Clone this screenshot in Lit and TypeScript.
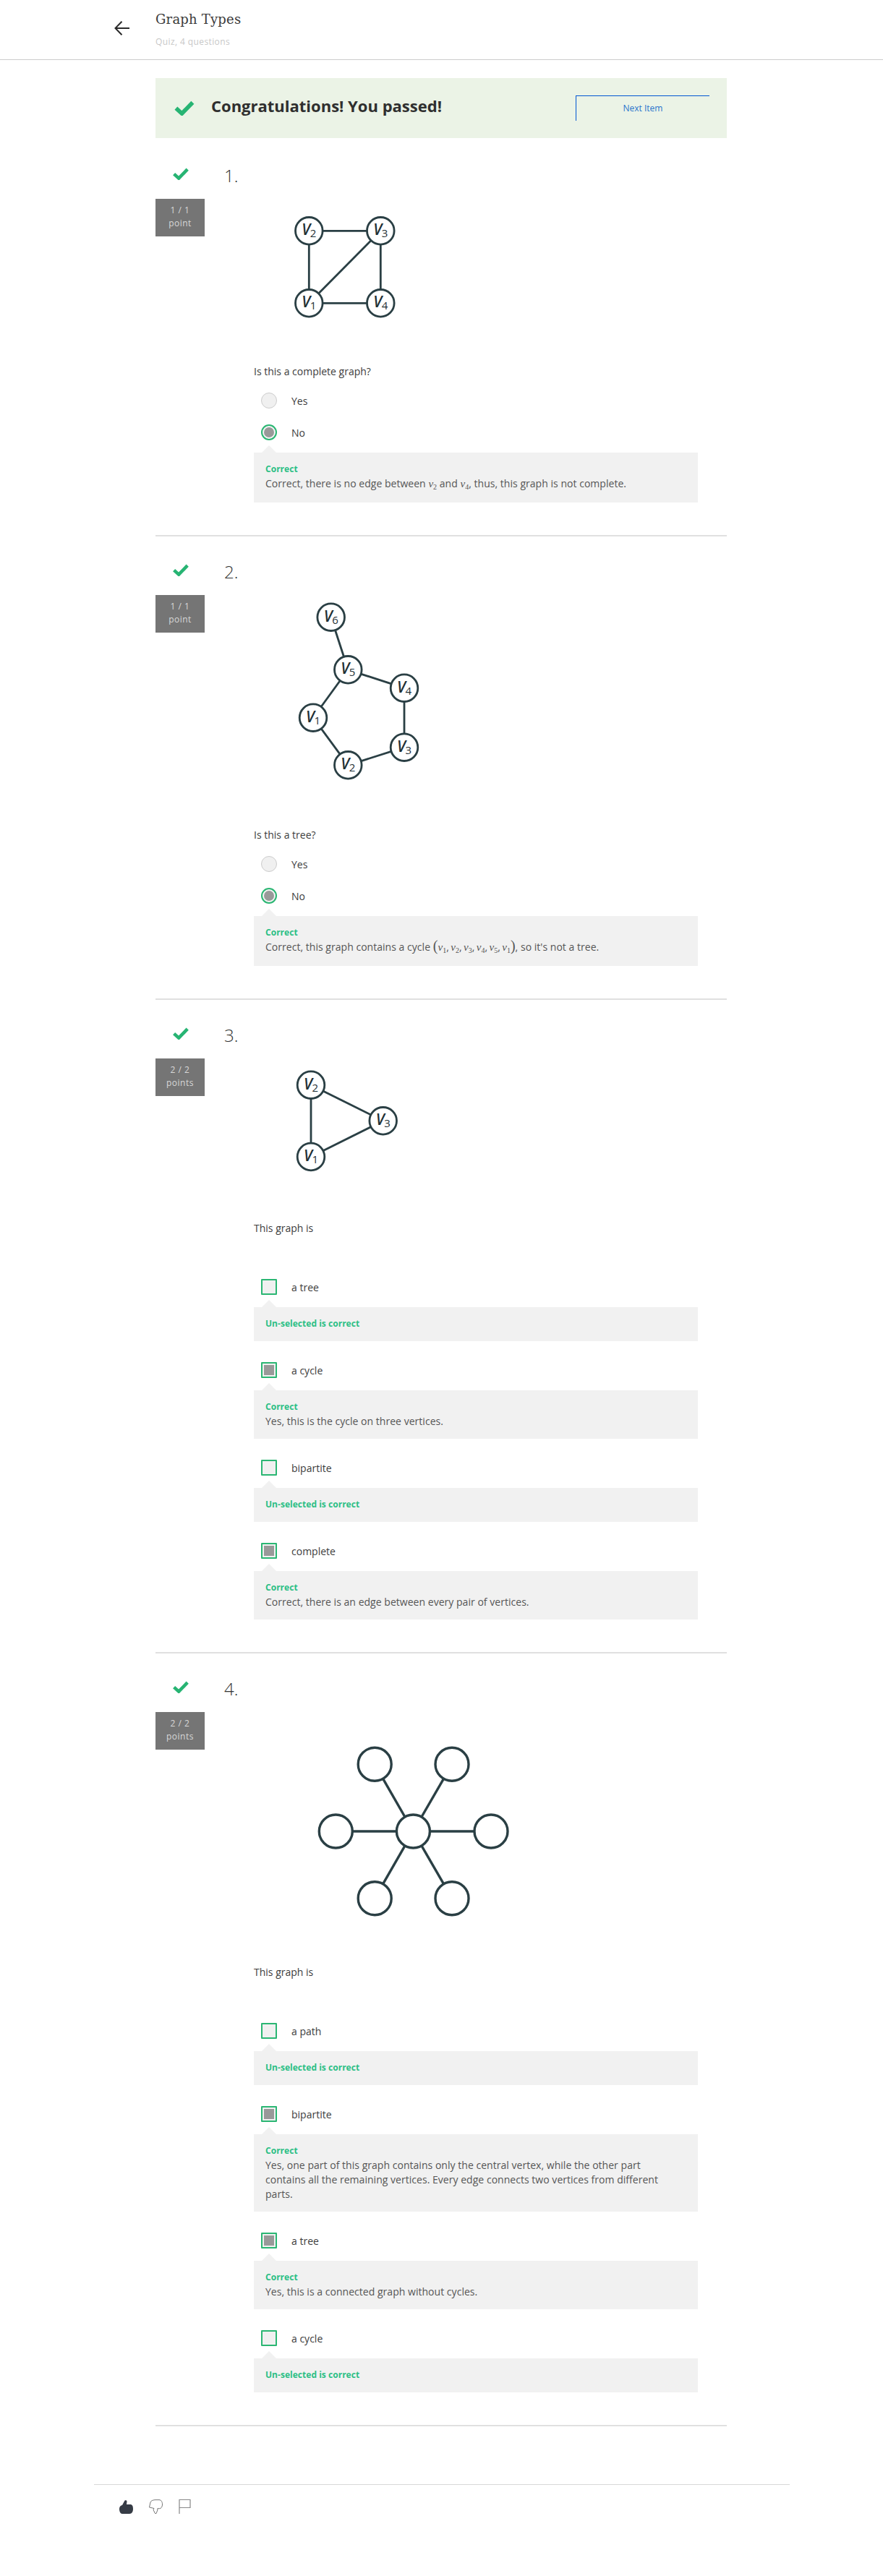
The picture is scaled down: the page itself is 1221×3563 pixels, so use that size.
import { LitElement, html, css, svg, nothing } from "lit";
import { customElement } from "lit/decorators.js";

type Pt = [number, number];
interface Graph { h: number; r: number; sw: number; nodes: Pt[]; labels: string[]; edges: [number, number][]; }
interface Opt { label: string; selected: boolean; head?: string; body?: unknown; math?: boolean; }

const top1 = 232, top2 = 780, top3 = 1422, top4 = 2326, L = 351;
const p = (x: number, y: number, t: number): Pt => [x - L, y - t];

const g1: Graph = { h: 272, r: 18.8, sw: 2.8, labels: ["1", "2", "3", "4"],
  nodes: [p(427.3, 419.3, top1), p(427.3, 319.3, top1), p(526.3, 319.3, top1), p(526.3, 419.3, top1)],
  edges: [[0, 1], [1, 2], [2, 3], [3, 0], [0, 2]] };
const g2: Graph = { h: 365, r: 18.8, sw: 2.8, labels: ["1", "2", "3", "4", "5", "6"],
  nodes: [p(433, 992.7, top2), p(481.3, 1058.3, top2), p(559, 1033.7, top2), p(559, 951.7, top2), p(481.3, 926.3, top2), p(457.7, 853.7, top2)],
  edges: [[0, 1], [1, 2], [2, 3], [3, 4], [4, 0], [4, 5]] };
const g3: Graph = { h: 268, r: 18.8, sw: 2.8, labels: ["1", "2", "3"],
  nodes: [p(430, 1601, top3), p(430, 1501.7, top3), p(529.7, 1551.3, top3)],
  edges: [[0, 1], [1, 2], [2, 0]] };
const g4: Graph = { h: 393, r: 23, sw: 3.4, labels: [],
  nodes: [p(571.4, 2534, top4), p(518.2, 2441.3, top4), p(625, 2441.3, top4), p(464.3, 2534, top4), p(679, 2534, top4), p(518.2, 2626.7, top4), p(625, 2626.7, top4)],
  edges: [[0, 1], [0, 2], [0, 3], [0, 4], [0, 5], [0, 6]] };

const v = (n: string) => html`<span class="mv">v<sub>${n}</sub></span>`;

const questions = [
  { n: "1.", s: "1 / 1", u: "point", g: g1, q: "Is this a complete graph?", kind: "radio", opts: [
    { label: "Yes", selected: false },
    { label: "No", selected: true, head: "Correct", math: true, body: html`Correct, there is no edge between ${v("2")} and ${v("4")}, thus, this graph is not complete.` },
  ] as Opt[] },
  { n: "2.", s: "1 / 1", u: "point", g: g2, q: "Is this a tree?", kind: "radio", opts: [
    { label: "Yes", selected: false },
    { label: "No", selected: true, head: "Correct", math: true, body: html`Correct, this graph contains a cycle <span class="paren">(</span>${v("1")},&thinsp;${v("2")},&thinsp;${v("3")},&thinsp;${v("4")},&thinsp;${v("5")},&thinsp;${v("1")}<span class="paren">)</span>, so it's not a tree.` },
  ] as Opt[] },
  { n: "3.", s: "2 / 2", u: "points", g: g3, q: "This graph is", kind: "check", opts: [
    { label: "a tree", selected: false, head: "Un-selected is correct" },
    { label: "a cycle", selected: true, head: "Correct", body: "Yes, this is the cycle on three vertices." },
    { label: "bipartite", selected: false, head: "Un-selected is correct" },
    { label: "complete", selected: true, head: "Correct", body: "Correct, there is an edge between every pair of vertices." },
  ] as Opt[] },
  { n: "4.", s: "2 / 2", u: "points", g: g4, q: "This graph is", kind: "check", opts: [
    { label: "a path", selected: false, head: "Un-selected is correct" },
    { label: "bipartite", selected: true, head: "Correct", body: "Yes, one part of this graph contains only the central vertex, while the other part contains all the remaining vertices. Every edge connects two vertices from different parts." },
    { label: "a tree", selected: true, head: "Correct", body: "Yes, this is a connected graph without cycles." },
    { label: "a cycle", selected: false, head: "Un-selected is correct" },
  ] as Opt[] },
];

const check = (cls: string) => html`<svg class=${cls} viewBox="0 0 22 17"><path d="M1.6 8.6 L8.2 14.6 L20.2 2.2" fill="none" stroke="#27b473" stroke-width="4.6"/></svg>`;

@customElement("app-root")
export class AppRoot extends LitElement {
  static styles = css`
    :host { display: block; width: 1221px; height: 3563px; background: #fff; font-family: "Open Sans", sans-serif; color: #373a3c; overflow: hidden; }
    .top { height: 82px; border-bottom: 1px solid #ccc; display: flex; }
    .back { width: 215px; flex: none; }
    .back svg { display: block; width: 22px; height: 20px; margin: 29px 0 0 158px; }
    .title { font-family: "DejaVu Serif", serif; font-size: 18px; line-height: 24px; letter-spacing: 0.2px; color: #3a3a3a; padding-top: 15px; }
    .sub { font-size: 12px; line-height: 16px; color: #c8c8c8; letter-spacing: 0.4px; margin-top: 11px; }
    main { padding: 25px 0 0 215px; width: 790px; }
    .banner { height: 83px; background: #ebf3e6; display: flex; align-items: center; padding: 0 24px 0 26px; box-sizing: border-box; margin-bottom: 3px; }
    .bcheck { width: 28px; height: 21px; flex: none; }
    .banner h2 { flex: 1; margin: 0 0 7px 23px; font-size: 22px; line-height: 28px; font-weight: 700; color: #2f2f2f; }
    .next { width: 185px; height: 35px; box-sizing: border-box; border-top: 1px solid #0056d2; border-left: 1px solid #0056d2; color: #2a73cc; font-size: 12px; line-height: 34px; text-align: center; }
    .q { display: grid; grid-template-columns: 68px 68px 614px; padding: 38px 0 45px; border-bottom: 2px solid #e0e0e0; }
    .left { display: flex; flex-direction: column; align-items: flex-start; }
    .qcheck { width: 22px; height: 17px; margin-left: 24px; }
    .score { width: 68px; height: 52px; margin-top: 26px; background: #757575; color: #d8d8d8; font-size: 12px; line-height: 18px; text-align: center; padding-top: 7px; box-sizing: border-box; letter-spacing: 0.5px; }
    .num { padding-left: 27px; font-size: 24px; font-weight: 300; line-height: 24px; color: #333; margin-top: -1px; }
    .fig { display: block; }
    .qt { font-size: 14px; line-height: 20px; color: #3c3c3c; margin: 0; }
    .opts { display: flex; flex-direction: column; }
    .opts.radio { padding-top: 19px; }
    .opts.check { padding-top: 60px; }
    .row { display: flex; align-items: center; height: 22px; gap: 20px; padding-left: 10px; font-size: 14px; color: #3c3c3c; }
    .radio .item + .item { margin-top: 22px; }
    .check .item + .item { margin-top: 29px; }
    .box { width: 22px; height: 22px; box-sizing: border-box; background: #f0f0f0; position: relative; flex: none; }
    .radio .box { border-radius: 50%; border: 1px solid #ccc; }
    .check .box { border-radius: 1px; border: 2px solid #2bb673; }
    .radio .box.sel { border: 2px solid #2bb673; background: #f4f4f4; }
    .radio .box.sel::after { content: ""; position: absolute; inset: 2px; border-radius: 50%; background: #999; }
    .check .box.sel::after { content: ""; position: absolute; inset: 2px; background: #999; }
    .fb { position: relative; margin-top: 17px; background: #f1f1f1; padding: 13px 40px 14px 16px; font-size: 14px; line-height: 20px; color: #555; letter-spacing: 0.03px; }
    .fb.math { padding-bottom: 16px; }
    .fb::before { content: ""; position: absolute; left: 11px; top: -10px; border-left: 10px solid transparent; border-right: 10px solid transparent; border-bottom: 10px solid #f1f1f1; }
    .head { font-size: 12px; font-weight: 700; color: #2bbf85; }
    .mv { font-family: "Liberation Serif", serif; font-style: italic; font-size: 15px; }
    .mv sub { font-style: normal; font-size: 10px; line-height: 0; vertical-align: -3px; }
    .paren { font-family: "Liberation Serif", serif; font-size: 20px; line-height: 0; }
    .foot { margin: 80px 0 0 130px; width: 962px; border-top: 1px solid #d8d8d8; padding: 20px 0 0 34px; box-sizing: border-box; display: flex; gap: 21px; }
    .foot svg { width: 20px; height: 20px; }
    .foot svg.flag { margin-left: 1px; }
    .lbl { font-family: "Open Sans", sans-serif; font-style: italic; font-weight: 600; font-size: 21px; fill: #1f3035; }
    .subl { font-family: "Open Sans", sans-serif; font-weight: 500; font-size: 15px; fill: #1f3035; }
  `;

  private graph(g: Graph) {
    return html`<svg class="fig" width="614" height=${g.h} viewBox="0 0 614 ${g.h}">
      ${g.edges.map(([a, b]) => svg`<line x1=${g.nodes[a][0]} y1=${g.nodes[a][1]} x2=${g.nodes[b][0]} y2=${g.nodes[b][1]} stroke="#2a3f44" stroke-width=${g.sw} />`)}
      ${g.nodes.map((n: Pt, i: number) => svg`
        <circle cx=${n[0]} cy=${n[1]} r=${g.r} fill="#fff" stroke="#2a3f44" stroke-width=${g.sw} />
        ${g.labels[i] ? svg`<text class="lbl" x=${n[0] - 10} y=${n[1] + 6}>V</text><text class="subl" x=${n[0] + 1.5} y=${n[1] + 9}>${g.labels[i]}</text>` : nothing}
      `)}
    </svg>`;
  }

  render() {
    return html`
      <header class="top">
        <div class="back">
          <svg viewBox="0 0 22 20"><path d="M21 10 H2 M10.5 .7 L1.5 10 L10.5 19.3" fill="none" stroke="#2a2a2a" stroke-width="2"/></svg>
        </div>
        <div>
          <div class="title">Graph Types</div>
          <div class="sub">Quiz, 4 questions</div>
        </div>
      </header>
      <main>
        <div class="banner">
          ${check("bcheck")}
          <h2>Congratulations! You passed!</h2>
          <div class="next">Next Item</div>
        </div>
        ${questions.map((q) => html`
          <section class="q">
            <div class="left">
              ${check("qcheck")}
              <div class="score">${q.s}<br />${q.u}</div>
            </div>
            <div class="num">${q.n}</div>
            <div>
              ${this.graph(q.g)}
              <p class="qt">${q.q}</p>
              <div class="opts ${q.kind}">
                ${q.opts.map((o) => html`
                  <div class="item">
                    <div class="row"><span class="box ${o.selected ? "sel" : ""}"></span><span>${o.label}</span></div>
                    ${o.head ? html`<div class="fb ${o.math ? "math" : ""}">
                      <div class="head">${o.head}</div>
                      ${o.body ? html`<div>${o.body}</div>` : nothing}
                    </div>` : nothing}
                  </div>`)}
              </div>
            </div>
          </section>`)}
      </main>
      <footer class="foot">
        <svg viewBox="0 0 20 20"><path d="M1 13 C1 10 3 8.5 5 8 L8 2.5 C8.5 .8 11.5 .8 11.5 3 L11 7 H16 C19 7 20 9.5 20 13 C20 17 18.5 20 15 20 H5 C2.5 20 1 17 1 13 Z" fill="#363c46"/></svg>
        <svg viewBox="0 0 20 20"><path d="M1.5 11 L3 4 C4 1.5 7 .7 10 .7 H15 C18 .7 19.5 3.5 19.5 7 C19.5 10.5 18 12.5 15.5 12.7 L12.8 12.7 L12.8 15 L11 19.5 L9.5 19.5 L7 14.5 L8 12.5 L6 12 L1.5 11 Z" fill="none" stroke="#777" stroke-width="1"/></svg>
        <svg class="flag" viewBox="0 0 20 20"><path d="M1 20 V.5 H16 V11.5 H1" fill="none" stroke="#888" stroke-width="1.2"/></svg>
      </footer>
    `;
  }
}
